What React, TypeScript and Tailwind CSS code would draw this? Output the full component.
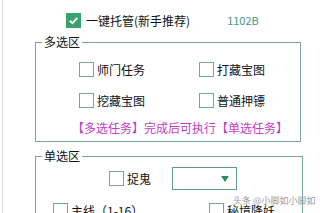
import React from 'react';

const font = { fontFamily: '"Noto Sans CJK SC", "Noto Sans", sans-serif' };

const Box: React.FC<{ checked?: boolean }> = ({ checked }) =>
    checked ? (
        <span className="flex h-[15px] w-[15px] shrink-0 items-center justify-center bg-[#36a46c]">
            <svg width="11" height="11" viewBox="0 0 11 11">
                <path d="M1.8 5.6 L4.4 8.2 L9.3 2.8" fill="none" stroke="#fff" strokeWidth="1.9" />
            </svg>
        </span>
    ) : (
        <span className="block h-[15px] w-[15px] shrink-0 border border-[#76a597] bg-white" />
    );

const Check: React.FC<{ label: string; checked?: boolean }> = ({ label, checked }) => (
    <div className="flex items-center">
        <Box checked={checked} />
        <span className="ml-[3px] whitespace-nowrap text-[12px] leading-[15px] text-[#111]">{label}</span>
    </div>
);

export default function App() {
    return (
        <div className="h-[213px] w-[320px] overflow-hidden bg-white pl-[2px]" style={font}>
            <div className="relative h-full border-l border-[#dedede]">
                {/* top option */}
                <div className="flex items-center pl-[63px] pt-[13px]">
                    <Box checked />
                    <span className="ml-[5px] text-[12px] leading-[15px] text-[#111]">一键托管(新手推荐)</span>
                    <span className="ml-[37px] text-[11px] leading-[15px] text-[#3c9a7c]">1102B</span>
                </div>

                {/* multi select */}
                <fieldset className="ml-[32px] mt-[7px] w-[266px] border border-[#76a597] px-0 pb-[6px]">
                    <legend className="ml-[6px] px-[2px] text-[12px] leading-[14px] text-[#111]">多选区</legend>
                    <div className="grid grid-cols-[120px_auto] gap-y-[16px] pl-[43px] pt-[13px]">
                        <Check label="师门任务" />
                        <Check label="打藏宝图" />
                        <Check label="挖藏宝图" />
                        <Check label="普通押镖" />
                    </div>
                    <p className="mt-[13px] pl-[36px] text-[12px] leading-[14px] text-[#c03cc6]">
                        【多选任务】完成后可执行【单选任务】
                    </p>
                </fieldset>

                {/* single select */}
                <fieldset className="ml-[32px] mt-[7px] w-[268px] border border-[#76a597] px-0">
                    <legend className="ml-[6px] px-[2px] text-[12px] leading-[14px] text-[#111]">单选区</legend>
                    <div className="flex items-center pl-[73px] pt-[4px]">
                        <Check label="捉鬼" />
                        <div className="ml-[21px] flex h-[23px] w-[65px] items-center justify-end border border-[#5f9c86] bg-white pr-[7px]">
                            <svg width="8" height="6" viewBox="0 0 8 6">
                                <path d="M0 0 H8 L4 6 Z" fill="#2f8a60" />
                            </svg>
                        </div>
                    </div>
                    <div className="grid grid-cols-[156px_auto] pl-[17px] pt-[13px]">
                        <Check label="主线（1-16）" />
                        <Check label="秘境降妖" />
                    </div>
                </fieldset>

                {/* watermark */}
                <span className="absolute left-[230px] top-[195px] whitespace-nowrap text-[9px] leading-[11px] text-[#9a9a9a]">
                    头条 @小脚如小脚如
                </span>
            </div>
        </div>
    );
}
